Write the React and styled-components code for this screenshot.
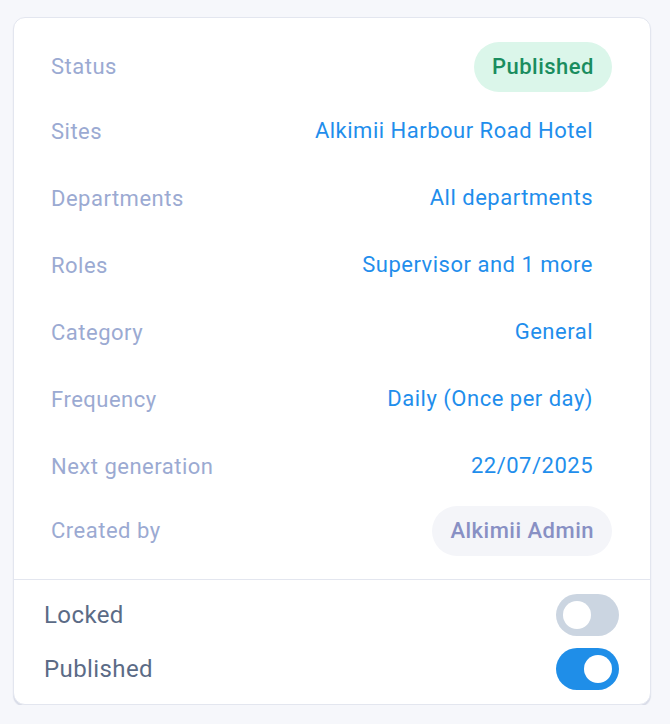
import React from "react";
import styled, { createGlobalStyle } from "styled-components";

const Global = createGlobalStyle`
  html, body { margin: 0; padding: 0; background: #f6f7fb; }
  body { font-family: Roboto, "Noto Sans", sans-serif; }
`;

const Page = styled.div`
  padding: 17px 19px 0 13px;
  width: 670px;
  box-sizing: border-box;
`;

const Card = styled.div`
  background: #fff;
  border: 1px solid #e3e6ef;
  border-radius: 12px;
  box-shadow: 0 2px 1px rgba(160, 170, 195, 0.35);
  overflow: hidden;
`;

const List = styled.div`
  padding: 17.5px 38px 17.5px 37px;
  display: flex;
  flex-direction: column;
`;

const Row = styled.div`
  display: flex;
  align-items: center;
  justify-content: space-between;
  height: ${(p) => (p.$pill ? 62 : 67)}px;
`;

const Label = styled.span`
  font-size: 22px;
  letter-spacing: 0.5px;
  color: #9baad2;
`;

const Value = styled.span`
  font-size: 22px;
  letter-spacing: 0.5px;
  line-height: 50px;
  height: 50px;
  padding: 0 ${(p) => (p.$bg ? 18 : 19)}px;
  border-radius: 25px;
  color: ${(p) => p.$color || "#1f8eec"};
  background: ${(p) => p.$bg || "transparent"};
  font-weight: ${(p) => (p.$bg ? 500 : 400)};
`;

const Divider = styled.div`
  height: 1px;
  background: #e3e6ef;
`;

const Footer = styled.div`
  padding: 14px 31px 14px 30px;
  display: flex;
  flex-direction: column;
  gap: 12px;
`;

const ToggleRow = styled.div`
  display: flex;
  align-items: center;
  justify-content: space-between;
  height: 42px;
`;

const ToggleLabel = styled.span`
  font-size: 24px;
  letter-spacing: 0.4px;
  color: #5b6b86;
`;

const Track = styled.div`
  width: 63px;
  height: 42px;
  border-radius: 21px;
  background: ${(p) => (p.$on ? "#1f8ee8" : "#cbd5e1")};
  display: flex;
  align-items: center;
  justify-content: ${(p) => (p.$on ? "flex-end" : "flex-start")};
  padding: 0 7px;
  box-sizing: border-box;
`;

const Knob = styled.div`
  width: 28px;
  height: 28px;
  border-radius: 50%;
  background: #fff;
`;

const rows = [
  { label: "Status", value: "Published", color: "#1a8d5f", bg: "#dbf6ea" },
  { label: "Sites", value: "Alkimii Harbour Road Hotel" },
  { label: "Departments", value: "All departments" },
  { label: "Roles", value: "Supervisor and 1 more" },
  { label: "Category", value: "General" },
  { label: "Frequency", value: "Daily (Once per day)" },
  { label: "Next generation", value: "22/07/2025" },
  { label: "Created by", value: "Alkimii Admin", color: "#8890c4", bg: "#f4f5f9" },
];

const toggles = [
  { label: "Locked", on: false },
  { label: "Published", on: true },
];

export default function App() {
  return (
    <>
      <Global />
      <Page>
        <Card>
          <List>
            {rows.map((r) => (
              <Row key={r.label} $pill={!!r.bg}>
                <Label>{r.label}</Label>
                <Value $color={r.color} $bg={r.bg}>{r.value}</Value>
              </Row>
            ))}
          </List>
          <Divider />
          <Footer>
            {toggles.map((t) => (
              <ToggleRow key={t.label}>
                <ToggleLabel>{t.label}</ToggleLabel>
                <Track $on={t.on}>
                  <Knob />
                </Track>
              </ToggleRow>
            ))}
          </Footer>
        </Card>
      </Page>
    </>
  );
}
